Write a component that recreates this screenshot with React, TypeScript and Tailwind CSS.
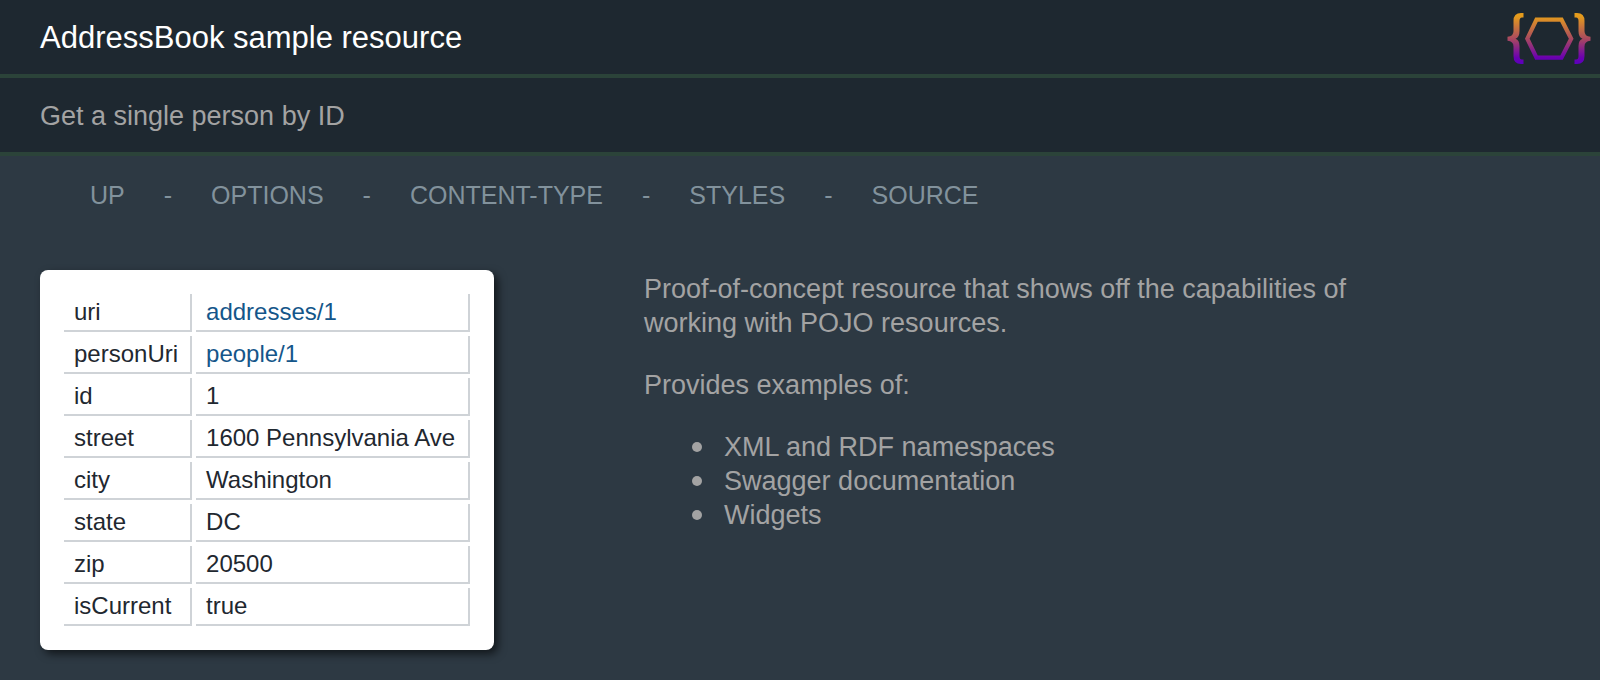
const links = ['UP', 'OPTIONS', 'CONTENT-TYPE', 'STYLES', 'SOURCE'];

const rows: { name: string; value: string; href?: string }[] = [
  { name: 'uri', value: 'addresses/1', href: '#addresses/1' },
  { name: 'personUri', value: 'people/1', href: '#people/1' },
  { name: 'id', value: '1' },
  { name: 'street', value: '1600 Pennsylvania Ave' },
  { name: 'city', value: 'Washington' },
  { name: 'state', value: 'DC' },
  { name: 'zip', value: '20500' },
  { name: 'isCurrent', value: 'true' },
];

const topics = ['XML and RDF namespaces', 'Swagger documentation', 'Widgets'];

function Logo() {
  return (
    <svg viewBox="0 0 84 52" className="mt-0.5 h-[52px] w-[84px] shrink-0" aria-hidden="true">
      <defs>
        <linearGradient id="logo-fade" gradientUnits="userSpaceOnUse" x1="0" y1="0" x2="0" y2="52">
          <stop offset="0.06" stopColor="#e59c1c" />
          <stop offset="0.5" stopColor="#a84860" />
          <stop offset="0.86" stopColor="#6a00b0" />
          <stop offset="1" stopColor="#5800c0" />
        </linearGradient>
      </defs>
      <path fill="none" stroke="url(#logo-fade)" strokeWidth="4.2" d="M29.500 6.7H54.500L64.200 25.7L54.500 44.7H29.500L20.300 25.7Z" />
      <g fill="url(#logo-fade)">
        <path d="M16.500 0H14Q6.500 0 6.500 8V18Q6.500 23.500 0.500 23.800V27.800Q6.500 28.200 6.500 33.500V43Q6.500 51 14 51H16.500V46.500H15Q12.500 46.500 12.500 43V33Q12.500 27 8.500 25.700Q12.500 24.500 12.500 18V8Q12.500 4.500 15 4.500H16.500Z" />
        <path d="M67.500 0H70Q77.500 0 77.500 8V18Q77.500 23.500 83.500 23.800V27.800Q77.500 28.200 77.500 33.500V43Q77.500 51 70 51H67.500V46.500H69Q71.500 46.500 71.500 43V33Q71.500 27 75.500 25.700Q71.500 24.500 71.500 18V8Q71.500 4.500 69 4.500H67.500Z" />
      </g>
    </svg>
  );
}

export default function App() {
  return (
    <div className="min-h-screen bg-[#2d3943] font-['Liberation_Sans',Arial,sans-serif] text-[27px] leading-[34px] text-[#a3a3a3]">
      <header className="bg-[#1e2830]">
        <div className="flex h-[78px] items-center justify-between border-b-4 border-[#2b4339] pt-0.5 pr-[9px] pl-10">
          <h1 className="text-[31px] text-white">AddressBook sample resource</h1>
          <Logo />
        </div>
        <div className="flex h-[78px] items-center border-b-4 border-[#2b4339] px-10 pt-0.5">
          <h2>Get a single person by ID</h2>
        </div>
      </header>

      <nav className="px-[90px] pt-[22px] text-[25px] text-[#82929c]">
        <ul className="flex flex-wrap">
          {links.map((label, i) => (
            <li key={label} className="flex">
              {i > 0 && <span className="px-[39px]">-</span>}
              <a href={'#' + label.toLowerCase()}>{label}</a>
            </li>
          ))}
        </ul>
      </nav>

      <main className="flex items-start gap-[150px] px-10 pt-[58px] pb-[30px]">
        <section className="shrink-0 rounded-lg bg-white p-5 shadow-[4px_4px_8px_rgba(0,0,0,0.6)]">
          <table className="border-separate border-spacing-1 text-2xl leading-7 text-[#1f2830]">
            <tbody>
              {rows.map((row) => (
                <tr key={row.name}>
                  <th scope="row" className="border-r-2 border-b-2 border-[#cfd3d7] py-1 pr-3 pl-2.5 text-left font-normal">
                    {row.name}
                  </th>
                  <td className="min-w-[274px] border-r-2 border-b-2 border-[#cfd3d7] py-1 pr-3 pl-2.5">
                    {row.href ? (
                      <a href={row.href} className="text-[#14568a]">
                        {row.value}
                      </a>
                    ) : (
                      row.value
                    )}
                  </td>
                </tr>
              ))}
            </tbody>
          </table>
        </section>

        <aside className="flex max-w-[740px] flex-col gap-7 pt-0.5">
          <p>Proof-of-concept resource that shows off the capabilities of working with POJO resources.</p>
          <p>Provides examples of:</p>
          <ul className="pl-12">
            {topics.map((topic) => (
              <li key={topic} className="flex items-center gap-[22px]">
                <span className="size-2.5 shrink-0 rounded-full bg-[#a3a3a3]" />
                {topic}
              </li>
            ))}
          </ul>
        </aside>
      </main>
    </div>
  );
}
